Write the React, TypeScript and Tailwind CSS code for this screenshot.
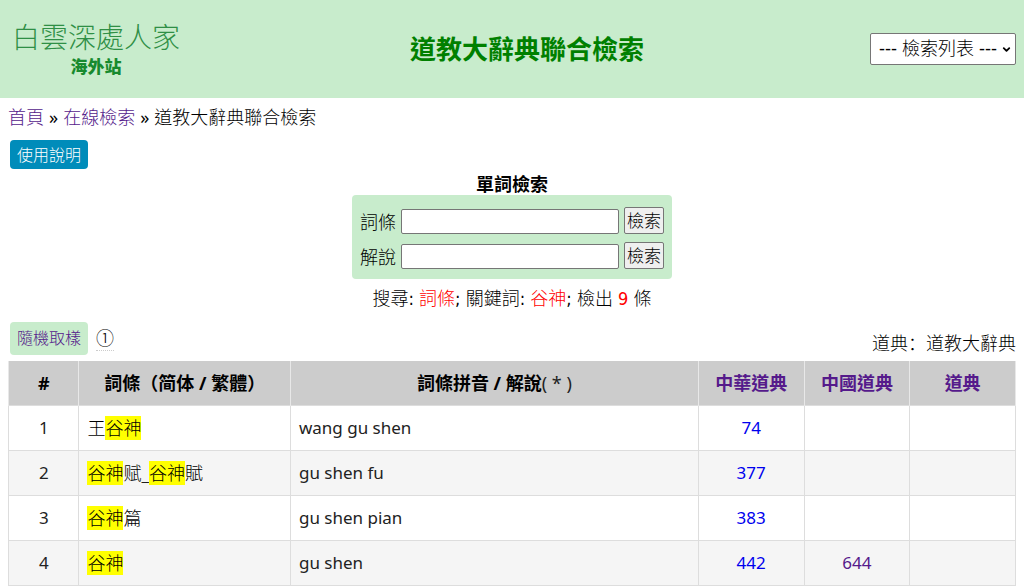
import React from 'react';
import { ChevronDown } from 'lucide-react';

type Entry = {
  id: number;
  // parts marked "hit" are highlighted
  term: { text: string; hit?: boolean }[];
  pinyin: string;
  zhonghua?: string;
  zhongguo?: string;
};

const entries: Entry[] = [
  { id: 1, term: [{ text: '王' }, { text: '谷神', hit: true }], pinyin: 'wang gu shen', zhonghua: '74' },
  {
    id: 2,
    term: [{ text: '谷神', hit: true }, { text: '赋_' }, { text: '谷神', hit: true }, { text: '賦' }],
    pinyin: 'gu shen fu',
    zhonghua: '377',
  },
  { id: 3, term: [{ text: '谷神', hit: true }, { text: '篇' }], pinyin: 'gu shen pian', zhonghua: '383' },
  { id: 4, term: [{ text: '谷神', hit: true }], pinyin: 'gu shen', zhonghua: '442', zhongguo: '644' },
];

const th = 'h-11 border-x border-[#e8e8e8] px-2 font-bold';
const td = 'h-[45px] border border-[#dddddd] px-2';
const latin = 'text-[17px] font-normal text-[#222222]';

const Header: React.FC = () => (
  <header className="flex h-[98px] items-center justify-between bg-[#c8eccc] px-2">
    <a href="#home" className="w-44 text-center text-[#2f8f45]">
      <span className="block text-[28px] leading-9 font-light whitespace-nowrap">白雲深處人家</span>
      <span className="block text-[17px] leading-6 font-black text-[#178a2e]">海外站</span>
    </a>
    <h1 className="text-[26px] leading-10 font-bold text-[#008000]">道教大辭典聯合檢索</h1>
    <div className="relative">
      <select
        aria-label="檢索列表"
        className="h-8 w-[146px] appearance-none rounded-[2px] border border-[#767676] bg-white pl-2 font-['Liberation_Sans','Noto_Sans_CJK_TC',sans-serif] text-[18px] leading-6 font-light text-black"
      >
        <option>--- 檢索列表 ---</option>
      </select>
      <ChevronDown className="pointer-events-none absolute top-[11px] right-1 size-[11px]" strokeWidth={4} />
    </div>
  </header>
);

const SearchRow: React.FC<{ id: string; label: string }> = ({ id, label }) => (
  <form className="flex items-end" onSubmit={e => e.preventDefault()}>
    <label htmlFor={id} className="w-[41px] whitespace-nowrap">{label}</label>
    <input id={id} type="text" className="h-[25px] min-w-0 flex-1 rounded-[2px] border border-[#767676] bg-white px-1" />
    <button
      type="submit"
      className="ml-[5px] h-[27px] w-10 rounded-[2px] border border-[#767676] bg-[#efefef] text-[17px] leading-6 font-light whitespace-nowrap"
    >
      檢索
    </button>
  </form>
);

const ResultTable: React.FC = () => (
  <table className="w-full table-fixed border-collapse">
    <colgroup>
      <col className="w-[7%]" />
      <col className="w-[21%]" />
      <col />
      <col className="w-[10.5%]" />
      <col className="w-[10.5%]" />
      <col className="w-[10.5%]" />
    </colgroup>
    <thead className="bg-[#cccccc]">
      <tr>
        <th className={th}>#</th>
        <th className={th}>詞條（简体 / 繁體）</th>
        <th className={th}>詞條拼音 / 解說<span className="font-normal text-[#222222]">( * )</span></th>
        <th className={th}><a href="#zhonghua" className="text-[#551a8b]">中華道典</a></th>
        <th className={th}><a href="#zhongguo" className="text-[#551a8b]">中國道典</a></th>
        <th className={th}><a href="#daodian" className="text-[#551a8b]">道典</a></th>
      </tr>
    </thead>
    <tbody>
      {entries.map(entry => (
        <tr key={entry.id} className="even:bg-[#f5f5f5]">
          <td className={`${td} ${latin} text-center`}>{entry.id}</td>
          <td className={td}>
            {entry.term.map((part, index) =>
              part.hit ? <mark key={index} className="bg-[#ffff00]">{part.text}</mark> : part.text
            )}
          </td>
          <td className={`${td} ${latin}`}>{entry.pinyin}</td>
          <td className={`${td} ${latin} text-center`}>
            <a href="#entry" className="text-[#0000ee]">{entry.zhonghua}</a>
          </td>
          <td className={`${td} ${latin} text-center`}>
            {entry.zhongguo && <a href="#entry" className="text-[#551a8b]">{entry.zhongguo}</a>}
          </td>
          <td className={td}></td>
        </tr>
      ))}
    </tbody>
  </table>
);

const App: React.FC = () => {
  return (
    <div className="bg-white font-['Noto_Sans','Noto_Sans_CJK_TC',sans-serif] text-[18px] leading-6 font-light text-black">
      <Header />
      <main className="px-2">
        <nav className="flex gap-[5px] pt-[7px]">
          <a href="#home" className="text-[#551a8b]">首頁</a>
          <span className="font-normal">»</span>
          <a href="#search" className="text-[#551a8b]">在線檢索</a>
          <span className="font-normal">»</span>
          <span>道教大辭典聯合檢索</span>
        </nav>
        <button type="button" className="mt-[11px] ml-[2px] block h-[29px] rounded bg-[#008cba] px-[7px] text-[16px] leading-6 text-white">
          使用說明
        </button>

        <section className="mt-1 text-center">
          <h2 className="leading-[22px] font-bold">單詞檢索</h2>
          <div className="mx-auto flex w-80 flex-col gap-2 rounded bg-[#c8eccc] px-2 pt-3 pb-[10px] text-left">
            <SearchRow id="term" label="詞條" />
            <SearchRow id="explanation" label="解說" />
          </div>
          <p className="mt-2 font-['DejaVu_Sans_Condensed','Noto_Sans_CJK_TC',sans-serif]">
            搜尋: <span className="text-[#ff0000]">詞條</span>; 關鍵詞: <span className="text-[#ff0000]">谷神</span>; 檢出{' '}
            <span className="text-[#ff0000]">9</span> 條
          </p>
        </section>

        <div className="mt-[11px] flex items-start justify-between">
          <div className="flex items-center gap-2 pl-[2px]">
            <a href="#random" className="h-[33px] rounded bg-[#c8eccc] px-[7px] text-[16px] leading-8 text-[#551a8b]">隨機取樣</a>
            <a href="#note" className="border-b border-dotted border-[#cccccc]">①</a>
          </div>
          <p className="h-[39px] pt-2 font-['Noto_Sans_CJK_SC',sans-serif]">道典：道教大辭典</p>
        </div>
        <ResultTable />
      </main>
    </div>
  );
};

export default App;
